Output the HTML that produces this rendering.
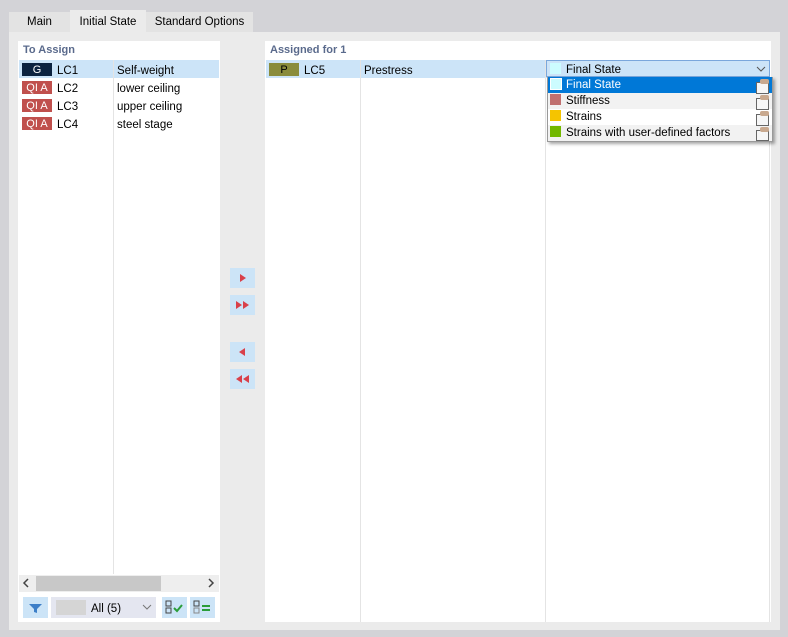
<!DOCTYPE html>
<html><head><style>
*{margin:0;padding:0;box-sizing:border-box}
body{width:788px;height:637px;background:#d3d3d7;font-family:"Liberation Sans",sans-serif;font-size:11px;color:#000;position:relative;overflow:hidden}
.a{position:absolute}
.tab{position:absolute;top:12px;height:20px;text-align:center;line-height:21px;font-size:11.5px;background:#e3e3e3}
.hdr{color:#5a6a8c;font-weight:bold;font-size:11px}
.badge{position:absolute;width:30px;height:13px;color:#fff;text-align:center;line-height:14px;font-size:11px}
.txt{position:absolute;font-size:11.5px;line-height:14px}
.btn{position:absolute;width:25px;height:20px;background:#cce4f7}
.ico{position:absolute;width:13px;height:12px;left:209px;border:1px solid #666;background:#f6f6f6}
.ico:after{content:"";position:absolute;left:3px;top:-4px;width:9px;height:5px;background:#c9a98f;border-radius:2px}
</style></head><body>
<div class="a" style="left:9px;top:32px;width:771px;height:598px;background:#ebebeb"></div>
<div class="tab" style="left:9px;width:61px">Main</div>
<div class="tab" style="left:70px;width:76px;background:#ebebeb;top:10px;height:22px;line-height:25px">Initial State</div>
<div class="tab" style="left:146px;width:107px">Standard Options</div>

<div class="a" style="left:18px;top:41px;width:202px;height:581px;background:#fff"></div>
<div class="a hdr" style="left:23px;top:44px">To Assign</div>
<div class="a" style="left:19px;top:60px;width:200px;height:18px;background:#cce4f8"></div>
<div class="a" style="left:113px;top:60px;width:1px;height:514px;background:#e4e4e4"></div>
<div class="badge" style="left:22px;top:63px;background:#0c2340">G</div>
<div class="badge" style="left:22px;top:81px;background:#c0504d">QI A</div>
<div class="badge" style="left:22px;top:99px;background:#c0504d">QI A</div>
<div class="badge" style="left:22px;top:117px;background:#c0504d">QI A</div>
<div class="txt" style="left:57px;top:64px">LC1</div><div class="txt" style="left:117px;top:64px">Self-weight</div>
<div class="txt" style="left:57px;top:82px">LC2</div><div class="txt" style="left:117px;top:82px">lower ceiling</div>
<div class="txt" style="left:57px;top:100px">LC3</div><div class="txt" style="left:117px;top:100px">upper ceiling</div>
<div class="txt" style="left:57px;top:118px">LC4</div><div class="txt" style="left:117px;top:118px">steel stage</div>
<div class="a" style="left:19px;top:575px;width:200px;height:17px;background:#eeeeee"></div>
<div class="a" style="left:36px;top:576px;width:125px;height:15px;background:#c8c8c8"></div>
<svg class="a" style="left:22px;top:578px" width="8" height="10"><path d="M6 1L2 5l4 4" fill="none" stroke="#444" stroke-width="1.5"/></svg>
<svg class="a" style="left:207px;top:578px" width="8" height="10"><path d="M2 1l4 4-4 4" fill="none" stroke="#444" stroke-width="1.5"/></svg>
<div class="btn" style="left:23px;top:597px;height:21px"><svg width="25" height="21"><path d="M6 7h13l-5 5v4l-3-1v-3z" fill="#3d7fc8"/></svg></div>
<div class="a" style="left:51px;top:597px;width:105px;height:21px;background:#e4e6f0"></div>
<div class="a" style="left:56px;top:600px;width:30px;height:15px;background:#d5d5d5"></div>
<div class="txt" style="left:91px;top:602px">All (5)</div>
<svg class="a" style="left:142px;top:604px" width="10" height="6"><path d="M1 1l4 4 4-4" fill="none" stroke="#777"/></svg>
<div class="btn" style="left:162px;top:597px;height:21px"><svg width="25" height="21"><rect x="4" y="4" width="5" height="5" fill="none" stroke="#444"/><rect x="4" y="11" width="5" height="5" fill="none" stroke="#444"/><path d="M12 11l3 3 5-6" fill="none" stroke="#2a9d3a" stroke-width="2"/></svg></div>
<div class="btn" style="left:190px;top:597px;height:21px"><svg width="25" height="21"><rect x="4" y="4" width="5" height="5" fill="none" stroke="#444"/><rect x="4" y="11" width="5" height="5" fill="none" stroke="#888"/><path d="M12 9h8M12 13h8" stroke="#2a9d3a" stroke-width="2"/></svg></div>

<div class="btn" style="left:230px;top:268px"><svg width="25" height="20"><path d="M10 6l6 4-6 4z" fill="#d9404a"/></svg></div>
<div class="btn" style="left:230px;top:295px"><svg width="25" height="20"><path d="M6 6l6 4-6 4zM13 6l6 4-6 4z" fill="#d9404a"/></svg></div>
<div class="btn" style="left:230px;top:342px"><svg width="25" height="20"><path d="M15 6l-6 4 6 4z" fill="#d9404a"/></svg></div>
<div class="btn" style="left:230px;top:369px"><svg width="25" height="20"><path d="M12 6l-6 4 6 4zM19 6l-6 4 6 4z" fill="#d9404a"/></svg></div>

<div class="a" style="left:265px;top:41px;width:506px;height:581px;background:#fff"></div>
<div class="a hdr" style="left:270px;top:44px">Assigned for 1</div>
<div class="a" style="left:266px;top:60px;width:503px;height:18px;background:#cce4f8"></div>
<div class="a" style="left:360px;top:60px;width:1px;height:562px;background:#e4e4e4"></div>
<div class="a" style="left:545px;top:60px;width:1px;height:562px;background:#e4e4e4"></div>
<div class="a" style="left:769px;top:60px;width:1px;height:562px;background:#e4e4e4"></div>
<div class="badge" style="left:269px;top:63px;background:#8a8c3c;color:#000">P</div>
<div class="txt" style="left:304px;top:64px">LC5</div>
<div class="txt" style="left:364px;top:64px">Prestress</div>
<div class="a" style="left:546px;top:60px;width:224px;height:17px;border:1px solid #7aa7dc;background:#cce4f8"></div>
<div class="a" style="left:550px;top:63px;width:11px;height:11px;background:#ccfcff"></div>
<div class="txt" style="left:566px;top:63px">Final State</div>
<svg class="a" style="left:756px;top:66px" width="10" height="6"><path d="M1 1l4 4 4-4" fill="none" stroke="#555"/></svg>
<div class="a" style="left:547px;top:77px;width:226px;height:65px;background:#f2f2f2;box-shadow:2px 2px 3px rgba(0,0,0,.35);border:1px solid #999"></div>
<div class="a" style="left:548px;top:77px;width:224px;height:16px;background:#0078d7"></div>
<div class="a" style="left:548px;top:109px;width:224px;height:16px;background:#fff"></div>
<div class="a" style="left:550px;top:78px;width:12px;height:12px;background:#ccfcff;border:1px solid #fff"></div>
<div class="a" style="left:550px;top:94px;width:11px;height:11px;background:#c07070"></div>
<div class="a" style="left:550px;top:110px;width:11px;height:11px;background:#f5c400"></div>
<div class="a" style="left:550px;top:126px;width:11px;height:11px;background:#72b800"></div>
<div class="txt" style="left:566px;top:78px;color:#fff">Final State</div>
<div class="txt" style="left:566px;top:94px">Stiffness</div>
<div class="txt" style="left:566px;top:110px">Strains</div>
<div class="txt" style="left:566px;top:126px">Strains with user-defined factors</div>
<div class="a" style="left:547px;top:77px;width:226px;height:65px">
<div class="ico" style="top:5px"></div><div class="ico" style="top:21px"></div><div class="ico" style="top:37px"></div><div class="ico" style="top:53px;height:11px"></div>
</div>
</body></html>
